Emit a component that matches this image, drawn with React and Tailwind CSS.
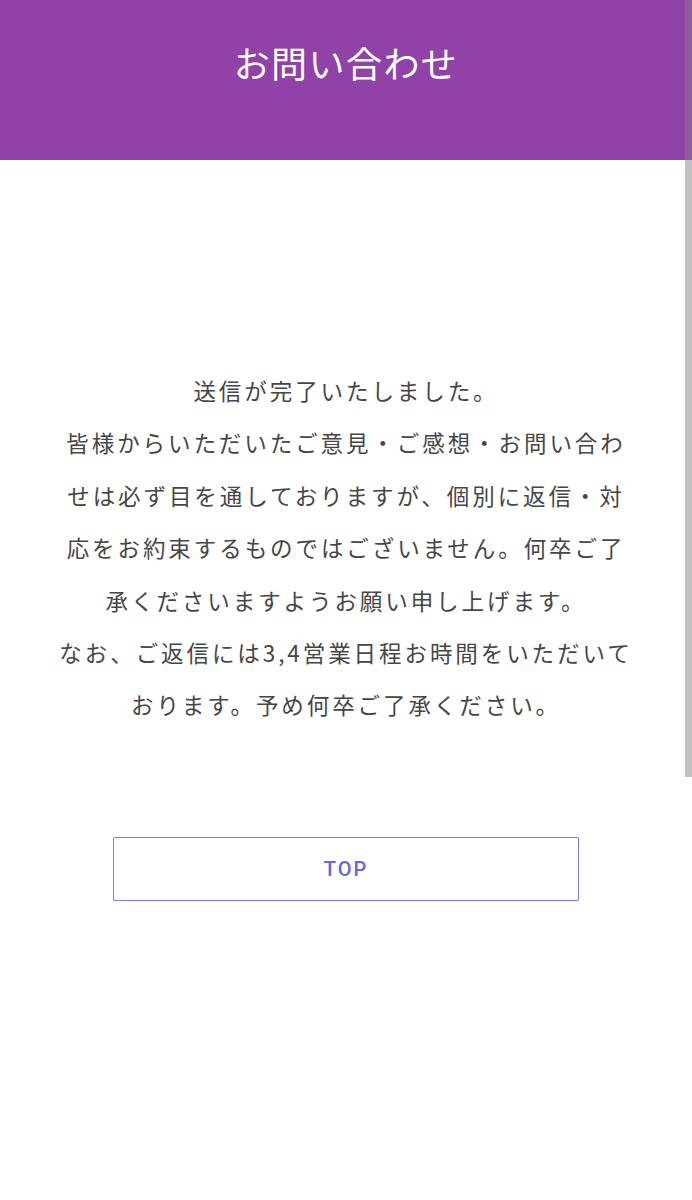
export default function App() {
  const font = { fontFamily: '"Noto Sans CJK JP", "Noto Sans", sans-serif' };
  return (
    <div className="relative min-h-[1200px] w-full bg-white" style={font}>
      <header className="flex h-[160px] items-start justify-center bg-[#9142a8] pt-[36px]">
        <h1 className="text-[36px] leading-[52px] tracking-[0.04em] text-white">お問い合わせ</h1>
      </header>
      <main className="flex flex-col items-center pt-[204px]">
        <div className="w-[580px] text-center text-[22.5px] leading-[52.4px] tracking-[0.13em] text-[#464646]">
          <p>送信が完了いたしました。</p>
          <p>皆様からいただいたご意見・ご感想・お問い合わせは必ず目を通しておりますが、個別に返信・対応をお約束するものではございません。何卒ご了承くださいますようお願い申し上げます。</p>
          <p>なお、ご返信には3,4営業日程お時間をいただいております。予め何卒ご了承ください。</p>
        </div>
        <button className="mt-[106px] flex h-[64px] w-[466px] items-center justify-center rounded-[2px] border border-[#8479e0] bg-white font-['Roboto',sans-serif] text-[20px] font-medium tracking-[0.1em] text-[#6b62e0]">
          TOP
        </button>
      </main>
      <div className="absolute right-0 top-0 flex h-[777px] w-[7px] flex-col">
        <div className="h-[160px] bg-[#8a5e98]"></div>
        <div className="flex-1 bg-[#c1c1c1]"></div>
      </div>
    </div>
  );
}
